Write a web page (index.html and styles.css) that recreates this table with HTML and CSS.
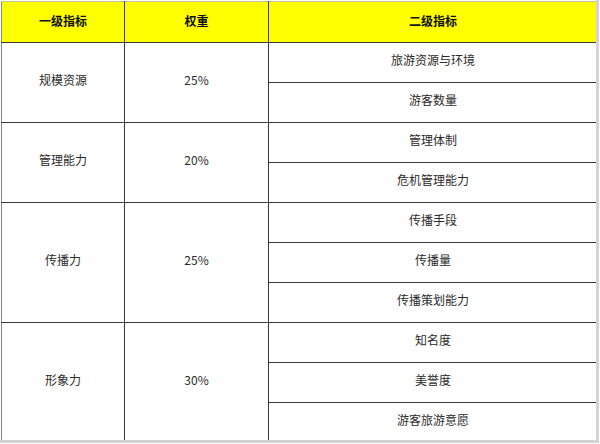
FILE: index.html
```html
<!DOCTYPE html>
<html>
<head>
<meta charset="utf-8">
<link rel="stylesheet" href="styles.css">
</head>
<body>
<div class="frame">
<table class="grid">
  <colgroup>
    <col class="c1"><col class="c2"><col class="c3">
  </colgroup>
  <thead>
    <tr class="head"><th>一级指标</th><th>权重</th><th>二级指标</th></tr>
  </thead>
  <tbody>
    <tr><td rowspan="2">规模资源</td><td rowspan="2">25%</td><td>旅游资源与环境</td></tr>
    <tr><td>游客数量</td></tr>
    <tr><td rowspan="2">管理能力</td><td rowspan="2">20%</td><td>管理体制</td></tr>
    <tr><td>危机管理能力</td></tr>
    <tr><td rowspan="3">传播力</td><td rowspan="3">25%</td><td>传播手段</td></tr>
    <tr><td>传播量</td></tr>
    <tr><td>传播策划能力</td></tr>
    <tr><td rowspan="3">形象力</td><td rowspan="3">30%</td><td>知名度</td></tr>
    <tr><td>美誉度</td></tr>
    <tr><td>游客旅游意愿</td></tr>
  </tbody>
</table>
</div>
</body>
</html>
```
FILE: styles.css
```css
html, body {
  margin: 0;
  padding: 0;
  background: #ffffff;
}
body {
  width: 600px;
  height: 444px;
  overflow: hidden;
  font-family: "Noto Sans CJK SC", "Noto Sans", sans-serif;
}
.frame {
  width: 595px;
  height: 439px;
  padding: 1px 0 0 1px;
  border-right: 3px solid #d4d4d4;
  border-bottom: 3px solid #d4d4d4;
  overflow: hidden;
}
.grid {
  border-collapse: collapse;
  table-layout: fixed;
  width: 596px;
}
.c1 { width: 123px; }
.c2 { width: 144px; }
.c3 { width: 329px; }
.grid th, .grid td {
  border: 1px solid #3a3a3a;
  text-align: center;
  vertical-align: middle;
  padding: 0;
  font-size: 12px;
  line-height: 16px;
}
.grid th {
  background: #ffff00;
  color: #111;
  font-weight: bold;
  height: 37px;
  border-top-color: #c8c8a0;
  padding-bottom: 3px;
}
.grid td {
  height: 33px;
  color: #2a2a2a;
  padding-bottom: 6px;
}
.grid tr > :first-child {
  border-left-color: #888;
}
.grid tr > :last-child {
  border-right-color: #888;
}
```
